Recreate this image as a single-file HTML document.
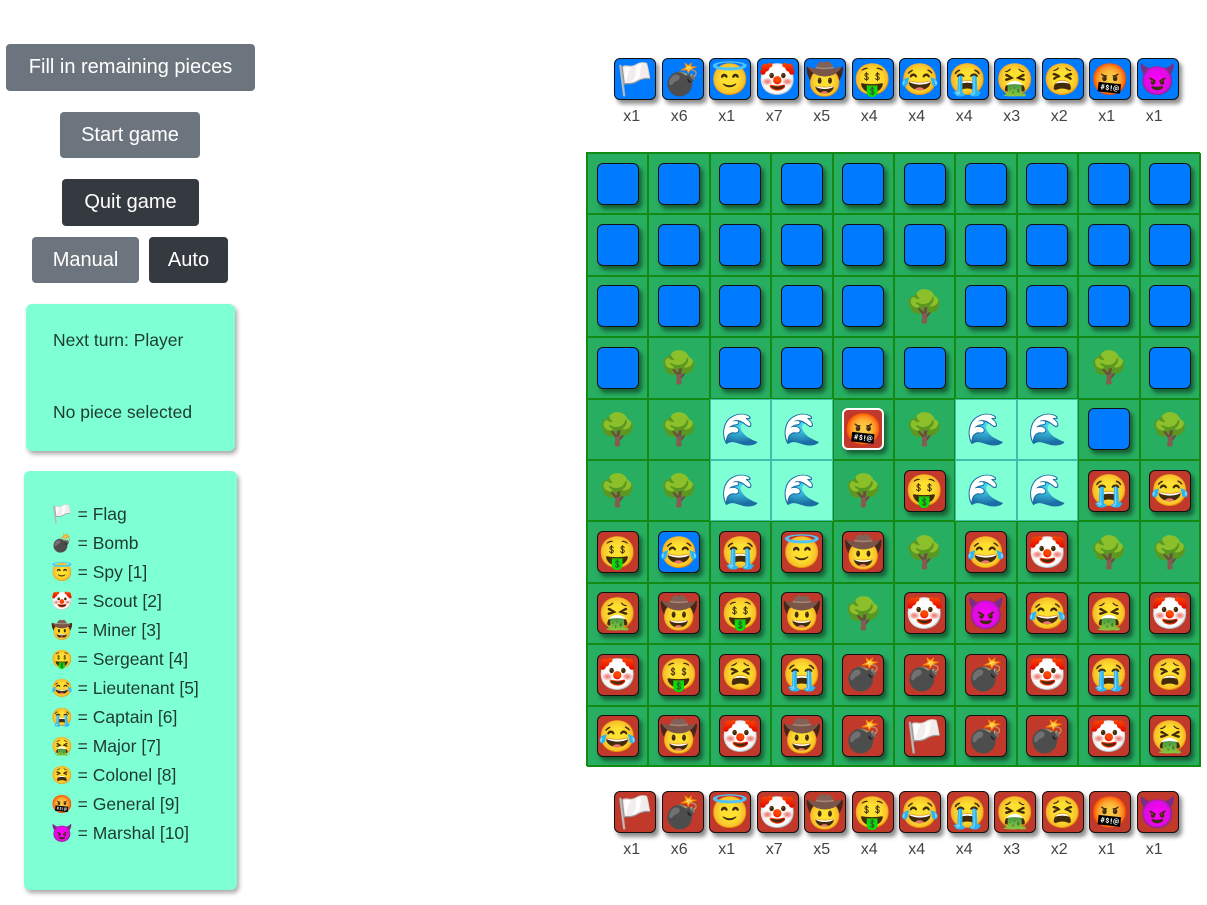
<!DOCTYPE html>
<html><head><meta charset="utf-8"><style>
body{margin:0;width:1207px;height:905px;background:#fff;font-family:"Century Gothic","Liberation Sans",sans-serif;position:relative;overflow:hidden;color:#222}
.btn{position:absolute;color:#fff;font-size:20px;border-radius:4px;display:flex;align-items:center;justify-content:center;background:#6c757d}
.dk{background:#343a40}
.box{position:absolute;background:#7fffd4;border-radius:6px;box-shadow:2px 3px 5px rgba(0,0,0,.35);font-size:17.5px;color:#1d3b34}
.box div{position:absolute;left:27px;white-space:nowrap}
.lg{line-height:29px;top:29px}
#bd{position:absolute;left:586px;top:152px;width:614px;height:614px;display:grid;grid-template-columns:repeat(10,61.4px);grid-template-rows:repeat(10,61.4px);background:#27ae60;box-sizing:border-box;border:1px solid #138a13}
.c{border:0.5px solid #138a13;box-sizing:border-box;display:flex;align-items:center;justify-content:center;font-size:31px;line-height:1;position:relative}
.w{background:#7fffd4;border-color:#3bbfa8}
.p{width:42px;height:42px;box-sizing:border-box;border:1.5px solid #111;border-radius:6px;background:#007bff;box-shadow:3px 4px 4px rgba(0,0,0,.45);display:flex;align-items:center;justify-content:center;font-size:31px;line-height:1}
.r{background:#c0392b}
.s{border:2px solid #fff}
.row{position:absolute;left:614px;display:flex}
.row .p{margin-right:5.5px}
.cnt{position:absolute;left:608px;display:flex;font-size:16px;color:#444}
.cnt span{width:47.5px;text-align:center}
</style></head><body>
<div class="btn" style="left:6px;top:44px;width:249px;height:47px">Fill in remaining pieces</div>
<div class="btn" style="left:60px;top:112px;width:140px;height:46px">Start game</div>
<div class="btn dk" style="left:62px;top:179px;width:137px;height:47px">Quit game</div>
<div class="btn" style="left:32px;top:237px;width:107px;height:46px">Manual</div>
<div class="btn dk" style="left:149px;top:237px;width:79px;height:46px">Auto</div>
<div class="box" style="left:26px;top:304px;width:209px;height:147px"><div style="top:26px">Next turn: Player</div><div style="top:98px">No piece selected</div></div>
<div class="box" style="left:24px;top:471px;width:213px;height:419px"><div class="lg">🏳️ = Flag<br>💣 = Bomb<br>😇 = Spy [1]<br>🤡 = Scout [2]<br>🤠 = Miner [3]<br>🤑 = Sergeant [4]<br>😂 = Lieutenant [5]<br>😭 = Captain [6]<br>🤮 = Major [7]<br>😫 = Colonel [8]<br>🤬 = General [9]<br>😈 = Marshal [10]</div></div>

<div class="row" style="top:58px"><b class="p">🏳️</b><b class="p">💣</b><b class="p">😇</b><b class="p">🤡</b><b class="p">🤠</b><b class="p">🤑</b><b class="p">😂</b><b class="p">😭</b><b class="p">🤮</b><b class="p">😫</b><b class="p">🤬</b><b class="p">😈</b></div>
<div class="cnt" style="top:108px"><span>x1</span><span>x6</span><span>x1</span><span>x7</span><span>x5</span><span>x4</span><span>x4</span><span>x4</span><span>x3</span><span>x2</span><span>x1</span><span>x1</span></div>

<div class="row" style="top:791px"><b class="p r">🏳️</b><b class="p r">💣</b><b class="p r">😇</b><b class="p r">🤡</b><b class="p r">🤠</b><b class="p r">🤑</b><b class="p r">😂</b><b class="p r">😭</b><b class="p r">🤮</b><b class="p r">😫</b><b class="p r">🤬</b><b class="p r">😈</b></div>
<div class="cnt" style="top:841px"><span>x1</span><span>x6</span><span>x1</span><span>x7</span><span>x5</span><span>x4</span><span>x4</span><span>x4</span><span>x3</span><span>x2</span><span>x1</span><span>x1</span></div>

<div id="bd">
<div class="c"><b class="p"></b></div><div class="c"><b class="p"></b></div><div class="c"><b class="p"></b></div><div class="c"><b class="p"></b></div><div class="c"><b class="p"></b></div><div class="c"><b class="p"></b></div><div class="c"><b class="p"></b></div><div class="c"><b class="p"></b></div><div class="c"><b class="p"></b></div><div class="c"><b class="p"></b></div>
<div class="c"><b class="p"></b></div><div class="c"><b class="p"></b></div><div class="c"><b class="p"></b></div><div class="c"><b class="p"></b></div><div class="c"><b class="p"></b></div><div class="c"><b class="p"></b></div><div class="c"><b class="p"></b></div><div class="c"><b class="p"></b></div><div class="c"><b class="p"></b></div><div class="c"><b class="p"></b></div>
<div class="c"><b class="p"></b></div><div class="c"><b class="p"></b></div><div class="c"><b class="p"></b></div><div class="c"><b class="p"></b></div><div class="c"><b class="p"></b></div><div class="c">🌳</div><div class="c"><b class="p"></b></div><div class="c"><b class="p"></b></div><div class="c"><b class="p"></b></div><div class="c"><b class="p"></b></div>
<div class="c"><b class="p"></b></div><div class="c">🌳</div><div class="c"><b class="p"></b></div><div class="c"><b class="p"></b></div><div class="c"><b class="p"></b></div><div class="c"><b class="p"></b></div><div class="c"><b class="p"></b></div><div class="c"><b class="p"></b></div><div class="c">🌳</div><div class="c"><b class="p"></b></div>
<div class="c">🌳</div><div class="c">🌳</div><div class="c w">🌊</div><div class="c w">🌊</div><div class="c"><b class="p r s">🤬</b></div><div class="c">🌳</div><div class="c w">🌊</div><div class="c w">🌊</div><div class="c"><b class="p"></b></div><div class="c">🌳</div>
<div class="c">🌳</div><div class="c">🌳</div><div class="c w">🌊</div><div class="c w">🌊</div><div class="c">🌳</div><div class="c"><b class="p r">🤑</b></div><div class="c w">🌊</div><div class="c w">🌊</div><div class="c"><b class="p r">😭</b></div><div class="c"><b class="p r">😂</b></div>
<div class="c"><b class="p r">🤑</b></div><div class="c"><b class="p">😂</b></div><div class="c"><b class="p r">😭</b></div><div class="c"><b class="p r">😇</b></div><div class="c"><b class="p r">🤠</b></div><div class="c">🌳</div><div class="c"><b class="p r">😂</b></div><div class="c"><b class="p r">🤡</b></div><div class="c">🌳</div><div class="c">🌳</div>
<div class="c"><b class="p r">🤮</b></div><div class="c"><b class="p r">🤠</b></div><div class="c"><b class="p r">🤑</b></div><div class="c"><b class="p r">🤠</b></div><div class="c">🌳</div><div class="c"><b class="p r">🤡</b></div><div class="c"><b class="p r">😈</b></div><div class="c"><b class="p r">😂</b></div><div class="c"><b class="p r">🤮</b></div><div class="c"><b class="p r">🤡</b></div>
<div class="c"><b class="p r">🤡</b></div><div class="c"><b class="p r">🤑</b></div><div class="c"><b class="p r">😫</b></div><div class="c"><b class="p r">😭</b></div><div class="c"><b class="p r">💣</b></div><div class="c"><b class="p r">💣</b></div><div class="c"><b class="p r">💣</b></div><div class="c"><b class="p r">🤡</b></div><div class="c"><b class="p r">😭</b></div><div class="c"><b class="p r">😫</b></div>
<div class="c"><b class="p r">😂</b></div><div class="c"><b class="p r">🤠</b></div><div class="c"><b class="p r">🤡</b></div><div class="c"><b class="p r">🤠</b></div><div class="c"><b class="p r">💣</b></div><div class="c"><b class="p r">🏳️</b></div><div class="c"><b class="p r">💣</b></div><div class="c"><b class="p r">💣</b></div><div class="c"><b class="p r">🤡</b></div><div class="c"><b class="p r">🤮</b></div>
</div>
</body></html>
